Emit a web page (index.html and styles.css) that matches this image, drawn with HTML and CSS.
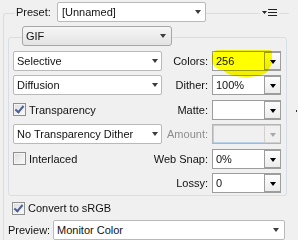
FILE: index.html
```html
<!DOCTYPE html>
<html lang="en">
  <head>
    <meta charset="UTF-8" />
    <title>Save for Web - GIF</title>
    <link rel="stylesheet" href="styles.css">
  </head>
  <body>
    <div class="panel">
      <div class="outer">
        <div class="preset-row">
          <span class="preset-label">Preset:</span>
          <div class="drop preset-drop">[Unnamed]<i class="tri"></i></div>
          <span class="menu-icon">
            <svg width="16" height="9" viewBox="0 0 16 9">
              <path d="M0 3h5l-2.5 3z" fill="#222"/>
              <path d="M6 1.5h9M6 4.5h9M6 7.5h9" stroke="#222" stroke-width="1"/>
            </svg>
          </span>
        </div>

        <div class="inner">
          <div class="format-btn">GIF<i class="tri"></i></div>
          <div class="grid">
            <div class="drop">Selective<i class="tri"></i></div>
            <span class="label">Colors:</span>
            <div class="combo">256<b class="btn"><i class="tri"></i></b></div>

            <div class="drop">Diffusion<i class="tri"></i></div>
            <span class="label">Dither:</span>
            <div class="combo">100%<b class="btn"><i class="tri"></i></b></div>

            <div class="check-row"><span class="box checked"></span>Transparency</div>
            <span class="label">Matte:</span>
            <div class="combo"><b class="btn"><i class="tri"></i></b></div>

            <div class="drop">No Transparency Dither<i class="tri"></i></div>
            <span class="label off">Amount:</span>
            <div class="combo disabled"><b class="btn"><i class="tri"></i></b></div>

            <div class="check-row"><span class="box"></span>Interlaced</div>
            <span class="label">Web Snap:</span>
            <div class="combo">0%<b class="btn"><i class="tri"></i></b></div>

            <div></div>
            <span class="label">Lossy:</span>
            <div class="combo">0<b class="btn"><i class="tri"></i></b></div>
          </div>
          <!-- marker scribble over the Colors field -->
          <div class="marker"></div>
          <div class="marker tail"></div>
        </div>

        <div class="check-row srgb"><span class="box checked"></span>Convert to sRGB</div>

        <div class="preview-row">
          <span class="preview-label">Preview:</span>
          <div class="drop preview-drop">Monitor Color<i class="tri"></i></div>
        </div>
      </div>
      <span class="speck"></span>
    </div>
  </body>
</html>
```

FILE: styles.css
```css
/* --------------------
   Save for Web panel
-------------------- */
body {
  margin: 0;
  background-color: #f0f0f0;
  font-family: "Liberation Sans", Arial, sans-serif;
  font-size: 11px;
  color: #111;
}

.panel {
  position: relative;
  width: 298px;
  height: 240px;
  padding: 13px 0 0 3px;
  box-sizing: border-box;
  overflow: hidden;
}

.outer {
  width: 285px;
  border-top: 1px solid #d5dfe5;
  border-left: 1px solid #d5dfe5;
  border-radius: 3px 0 0 0;
  height: 240px;
}

.preset-row {
  display: flex;
  align-items: center;
  height: 20px;
  margin-top: -12px;
}

.preset-label {
  margin-left: 11px;
  width: 42px;
  padding-left: 1px;
  box-sizing: border-box;
  background-color: #f0f0f0;
  line-height: 20px;
}

.drop {
  position: relative;
  height: 20px;
  line-height: 18px;
  box-sizing: border-box;
  border: 1px solid #b9b9b9;
  border-radius: 2px;
  background-color: #fff;
  padding-left: 3px;
  white-space: nowrap;
}

.tri {
  position: absolute;
  top: 7px;
  right: 3px;
  width: 0;
  height: 0;
  border-left: 3.5px solid transparent;
  border-right: 3.5px solid transparent;
  border-top: 4px solid #3c3c3c;
}

.preset-drop {
  width: 149px;
  padding-left: 4px;
}

.preset-drop .tri {
  right: 4px;
}

.menu-icon {
  margin-left: 54px;
  width: 19px;
  height: 20px;
  background-color: #f0f0f0;
  display: flex;
  align-items: center;
  justify-content: center;
}

.inner {
  position: relative;
  margin: 15px 0 0 4px;
  width: 279px;
  box-sizing: border-box;
  border: 1px solid #d5dfe5;
  border-radius: 3px;
  padding: 0 5px 2px 4px;
}

.format-btn {
  position: relative;
  width: 150px;
  height: 20px;
  line-height: 18px;
  margin: -12px 0 0 9px;
  box-sizing: border-box;
  padding-left: 3px;
  border: 1px solid #a7a7a7;
  border-radius: 3px;
  background: linear-gradient(#f6f6f6, #e3e3e3);
}

.format-btn .tri {
  right: 5px;
}

.grid {
  display: grid;
  grid-template-columns: 149px minmax(0, 1fr) 69px;
  grid-auto-rows: 20px;
  row-gap: 4.4px;
  margin-top: 5px;
}

.label {
  display: flex;
  justify-content: flex-end;
  align-items: center;
  white-space: nowrap;
  padding-right: 4px;
}

.label.off {
  color: #8d8d8d;
}

.combo {
  position: relative;
  box-sizing: border-box;
  border: 1px solid #9d9d9d;
  background-color: #fff;
  line-height: 18px;
  padding-left: 3px;
}

.combo .btn {
  position: absolute;
  top: 0;
  right: 0;
  width: 16px;
  height: 18px;
  box-sizing: border-box;
  border: 1px solid #9d9d9d;
  border-right: 0;
  background: linear-gradient(#fdfdfd, #ececec);
}

.combo .btn .tri {
  top: 7px;
  right: 4px;
  border-top-color: #000;
}

.combo.disabled {
  border-color: #b4b4b4;
  background-color: #f0f0f0;
  box-shadow: inset 0 0 0 1px #b9d1ea;
}

.combo.disabled .btn {
  border-color: #d0d0d0;
  background: #f0f0f0;
}

.combo.disabled .tri {
  border-top-color: #a8a8a8;
}

.check-row {
  display: flex;
  align-items: center;
  gap: 3px;
}

.box {
  width: 13px;
  height: 13px;
  box-sizing: border-box;
  border: 1px solid #8e8f8f;
  background: linear-gradient(135deg, #dcdcdc, #fbfbfb);
  box-shadow: inset 0 0 0 1px #f4f4f4;
  position: relative;
}

.box.checked::after {
  content: "";
  position: absolute;
  left: 3px;
  top: 0;
  width: 3px;
  height: 7px;
  border-right: 2px solid #4a5f97;
  border-bottom: 2px solid #4a5f97;
  transform: rotate(40deg);
}

.marker {
  position: absolute;
  left: 203px;
  top: 12px;
  width: 60px;
  height: 20px;
  border-radius: 6px 3px 8px 10px;
  background-color: #ffff00;
  mix-blend-mode: multiply;
}

.marker.tail {
  left: 214px;
  top: 22px;
  width: 46px;
  height: 17px;
  border-radius: 50%;
}

.srgb {
  margin: 6px 0 0 8px;
  height: 13px;
}

.preview-row {
  display: flex;
  align-items: center;
  margin-top: 5px;
}

.preview-label {
  margin-left: 4px;
  width: 45px;
  line-height: 20px;
}

.preview-drop {
  width: 232px;
  padding-left: 3px;
}

.preview-drop .tri {
  right: 5px;
}

.speck {
  position: absolute;
  left: 296px;
  top: 110px;
  width: 1px;
  height: 2px;
  background-color: #333;
}
```
